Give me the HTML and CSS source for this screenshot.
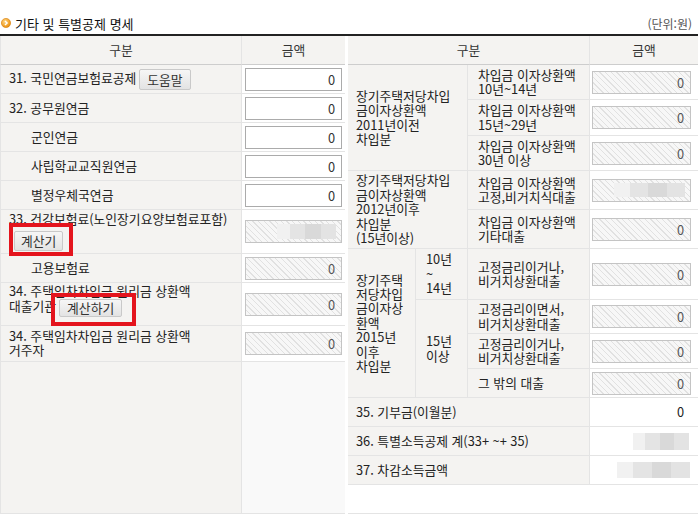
FILE: index.html
```html
<!DOCTYPE html>
<html lang="ko">
<head>
<meta charset="utf-8">
<title>기타 및 특별공제 명세</title>
<link rel="stylesheet" href="styles.css">
</head>
<body>
<div class="page">
  <div class="title-bar">
    <h2 class="title">
      <svg class="bullet" width="10" height="10" viewBox="0 0 10 10" aria-hidden="true">
        <defs>
          <radialGradient id="bg" cx="40%" cy="35%" r="70%">
            <stop offset="0" stop-color="#ffd681"/>
            <stop offset="1" stop-color="#e98a06"/>
          </radialGradient>
        </defs>
        <circle cx="5" cy="5" r="4.6" fill="url(#bg)" stroke="#d67c05" stroke-width="0.6"/>
        <path d="M4 2.9 L6.1 5 L4 7.1" fill="none" stroke="#fff" stroke-width="1.4"/>
      </svg>
      기타 및 특별공제 명세
    </h2>
    <span class="unit">(단위:원)</span>
  </div>

  <div class="tables">
    <table class="grid left">
      <colgroup><col class="lc-label"><col class="lc-amt"></colgroup>
      <thead>
        <tr class="h-head"><th class="first">구분</th><th class="last">금액</th></tr>
      </thead>
      <tbody>
        <tr class="h29">
          <td class="lbl first">31. 국민연금보험료공제<button class="btn btn-help" type="button">도움말</button></td>
          <td class="amt last"><input class="field" type="text" value="0" readonly></td>
        </tr>
        <tr class="h29">
          <td class="lbl first">32. 공무원연금</td>
          <td class="amt last"><input class="field" type="text" value="0" readonly></td>
        </tr>
        <tr class="h29">
          <td class="lbl first sub">군인연금</td>
          <td class="amt last"><input class="field" type="text" value="0" readonly></td>
        </tr>
        <tr class="h29">
          <td class="lbl first sub">사립학교교직원연금</td>
          <td class="amt last"><input class="field" type="text" value="0" readonly></td>
        </tr>
        <tr class="h29">
          <td class="lbl first sub">별정우체국연금</td>
          <td class="amt last"><input class="field" type="text" value="0" readonly></td>
        </tr>
        <tr class="h44">
          <td class="lbl first top">33. 건강보험료(노인장기요양보험료포함)<br><span class="mark mark-a"><button class="btn btn-calc" type="button">계산기</button></span></td>
          <td class="amt last"><span class="field dis"><span class="smudge sm-l33"></span></span></td>
        </tr>
        <tr class="h29">
          <td class="lbl first sub">고용보험료</td>
          <td class="amt last"><input class="field dis" type="text" value="0" readonly></td>
        </tr>
        <tr class="h42">
          <td class="lbl first top2">34. 주택임차차입금 원리금 상환액<br>대출기관<span class="mark mark-b"><button class="btn btn-calc2" type="button">계산하기</button></span></td>
          <td class="amt last"><input class="field dis" type="text" value="0" readonly></td>
        </tr>
        <tr class="h36">
          <td class="lbl first">34. 주택임차차입금 원리금 상환액<br>거주자</td>
          <td class="amt last"><input class="field dis" type="text" value="0" readonly></td>
        </tr>
        <tr class="h-fill-l">
          <td class="lbl first"></td>
          <td class="amt fill last"></td>
        </tr>
      </tbody>
    </table>

    <table class="grid right">
      <colgroup><col class="rc-a"><col class="rc-b"><col class="rc-c"><col class="rc-amt"></colgroup>
      <thead>
        <tr class="h-head"><th colspan="3">구분</th><th class="last">금액</th></tr>
      </thead>
      <tbody>
        <tr class="h35">
          <td class="lbl" rowspan="3" colspan="2">장기주택저당차입<br>금이자상환액<br>2011년이전<br>차입분</td>
          <td class="lbl subcol">차입금 이자상환액<br>10년~14년</td>
          <td class="amt last"><input class="field wide dis" type="text" value="0" readonly></td>
        </tr>
        <tr class="h36">
          <td class="lbl subcol">차입금 이자상환액<br>15년~29년</td>
          <td class="amt last"><input class="field wide dis" type="text" value="0" readonly></td>
        </tr>
        <tr class="h35">
          <td class="lbl subcol">차입금 이자상환액<br>30년 이상</td>
          <td class="amt last"><input class="field wide dis" type="text" value="0" readonly></td>
        </tr>
        <tr class="h39">
          <td class="lbl" rowspan="2" colspan="2">장기주택저당차입<br>금이자상환액<br>2012년이후<br>차입분<br>(15년이상)</td>
          <td class="lbl subcol">차입금 이자상환액<br>고정,비거치식대출</td>
          <td class="amt last"><span class="field wide dis"><span class="smudge sm-r12"></span></span></td>
        </tr>
        <tr class="h39">
          <td class="lbl subcol">차입금 이자상환액<br>기타대출</td>
          <td class="amt last"><input class="field wide dis" type="text" value="0" readonly></td>
        </tr>
        <tr class="h51">
          <td class="lbl" rowspan="4">장기주택<br>저당차입<br>금이자상<br>환액<br>2015년<br>이후<br>차입분</td>
          <td class="lbl yr">10년<br>~<br>14년</td>
          <td class="lbl subcol">고정금리이거나,<br>비거치상환대출</td>
          <td class="amt last"><input class="field wide dis" type="text" value="0" readonly></td>
        </tr>
        <tr class="h34">
          <td class="lbl yr" rowspan="3">15년<br>이상</td>
          <td class="lbl subcol">고정금리이면서,<br>비거치상환대출</td>
          <td class="amt last"><input class="field wide dis" type="text" value="0" readonly></td>
        </tr>
        <tr class="h35">
          <td class="lbl subcol">고정금리이거나,<br>비거치상환대출</td>
          <td class="amt last"><input class="field wide dis" type="text" value="0" readonly></td>
        </tr>
        <tr class="h29">
          <td class="lbl subcol">그 밖의 대출</td>
          <td class="amt last"><input class="field wide dis" type="text" value="0" readonly></td>
        </tr>
        <tr class="h29">
          <td class="lbl" colspan="3">35. 기부금(이월분)</td>
          <td class="amt plain last">0</td>
        </tr>
        <tr class="h29">
          <td class="lbl" colspan="3">36. 특별소득공제 계(33+ ~+ 35)</td>
          <td class="amt plain last"><span class="smudge sm-36"></span></td>
        </tr>
        <tr class="h29">
          <td class="lbl" colspan="3">37. 차감소득금액</td>
          <td class="amt plain last"><span class="smudge sm-37"></span></td>
        </tr>
        <tr class="h29">
          <td class="blank last" colspan="4"></td>
        </tr>
      </tbody>
    </table>
  </div>
</div>
</body>
</html>
```

FILE: styles.css
```css
* { box-sizing: border-box; }

html, body {
  margin: 0;
  padding: 0;
  background: #fff;
}

body {
  font-family: "Noto Sans CJK KR", "Malgun Gothic", "Noto Sans", sans-serif;
  font-size: 12.8px;
  color: #222;
}

.page {
  width: 698px;
}

/* title */
.title-bar {
  display: flex;
  align-items: center;
  justify-content: space-between;
  height: 34px;
  padding: 12px 6px 0 1px;
}

.title {
  margin: 0;
  display: flex;
  align-items: center;
  gap: 4px;
  font-size: 13px;
  font-weight: normal;
  color: #111;
}

.bullet { display: block; flex: none; }

.unit {
  font-size: 12px;
  color: #555;
}

/* tables */
.tables {
  display: flex;
  gap: 3px;
  border-top: 2px solid #222;
}

.grid {
  border-collapse: separate;
  border-spacing: 0;
  table-layout: fixed;
}

.left { width: 345px; }
.right { width: 350px; }

.lc-label { width: 242px; }
.lc-amt { width: 103px; }
.rc-a { width: 68px; }
.rc-b { width: 52px; }
.rc-c { width: 122px; }
.rc-amt { width: 108px; }

th, td {
  padding: 0;
  border-bottom: 1px solid #e4e4e4;
  border-right: 1px solid #e4e4e4;
  vertical-align: middle;
  line-height: 14.4px;
  text-align: left;
}

th {
  background: #f4f3f1;
  font-weight: normal;
  text-align: center;
  border-bottom-color: #cdcdcd;
  color: #333;
}

.left .first { border-left: 1px solid #e4e4e4; }
.last { border-right: none; }

.h-head { height: 29px; }
.h29 { height: 29px; }
.h34 { height: 34px; }
.h35 { height: 35px; }
.h36 { height: 36px; }
.h39 { height: 39px; }
.h42 { height: 42px; }
.h44 { height: 44px; }
.h51 { height: 51px; }
.h-fill-l { height: 152px; }

.lbl {
  background: #f4f3f1;
  padding-left: 8px;
  color: #222;
}

.lbl.sub { padding-left: 30px; }
.lbl.subcol { padding-left: 10px; }
.lbl.yr { padding-left: 10px; }

.lbl.top {
  vertical-align: top;
  padding-top: 2px;
}

.lbl.top2 {
  vertical-align: top;
  padding-top: 1px;
}

.amt {
  background: #fff;
  padding-left: 3px;
}

.right .amt { padding-left: 2px; }

.amt.fill { background: #f9f9f9; }

.amt.plain {
  text-align: right;
  padding-right: 14px;
}

.blank { background: #fff; }

/* fields */
.field {
  display: inline-flex;
  align-items: center;
  justify-content: flex-end;
  width: 97px;
  height: 23px;
  margin: 0;
  padding: 0 6px;
  border: 1px solid #ababab;
  border-radius: 0;
  background: #fff;
  font: inherit;
  font-size: 12.8px;
  color: #333;
  text-align: right;
  vertical-align: middle;
  outline: none;
}

.field.wide { width: 99px; }

.field.dis {
  border-color: #c4c4c4;
  color: #555;
  background-color: #f7f7f7;
  background-image: repeating-linear-gradient(45deg, transparent 0 3px, #e1e1e1 3px 4px);
}

.smudge {
  display: inline-block;
  height: 15px;
  background: linear-gradient(90deg, #f1f1f1 0 22%, #e4e4e4 22% 48%, #d9d9d9 48% 74%, #e3e3e3 74%);
  filter: blur(0.6px);
}

.sm-l33 { width: 59px; margin-right: -1px; }
.sm-r12 { width: 71px; height: 14px; margin-right: -1px; }
.sm-36 { width: 56px; height: 17px; margin-right: -5px; vertical-align: middle; }
.sm-37 { width: 73px; height: 16px; margin-right: -6px; vertical-align: middle; }

/* buttons */
.btn {
  font: inherit;
  font-size: 12.8px;
  color: #333;
  padding: 0 7px;
  border: 1px solid #c9c9c9;
  border-radius: 2px;
  background: linear-gradient(#f6f6f6, #e3e3e3);
  vertical-align: middle;
  cursor: pointer;
}

.btn-help {
  height: 21px;
  line-height: 19px;
  margin-left: 3px;
}

.btn-calc {
  height: 20px;
  line-height: 18px;
  padding: 0 6px;
}

.btn-calc2 {
  height: 18px;
  line-height: 16px;
}

/* red annotation boxes over the buttons */
.mark {
  position: relative;
  display: inline-block;
  vertical-align: middle;
}

.mark::after {
  content: "";
  position: absolute;
  border: 4px solid #e4141d;
  pointer-events: none;
}

.mark-a {
  margin-left: 5px;
  margin-top: 4px;
}

.mark-a::after {
  left: -5px;
  right: -10px;
  top: -8px;
  bottom: -5px;
}

.mark-b {
  margin-left: 3px;
}

.mark-b::after {
  left: -8px;
  right: -14px;
  top: -6px;
  bottom: -9px;
}
```
